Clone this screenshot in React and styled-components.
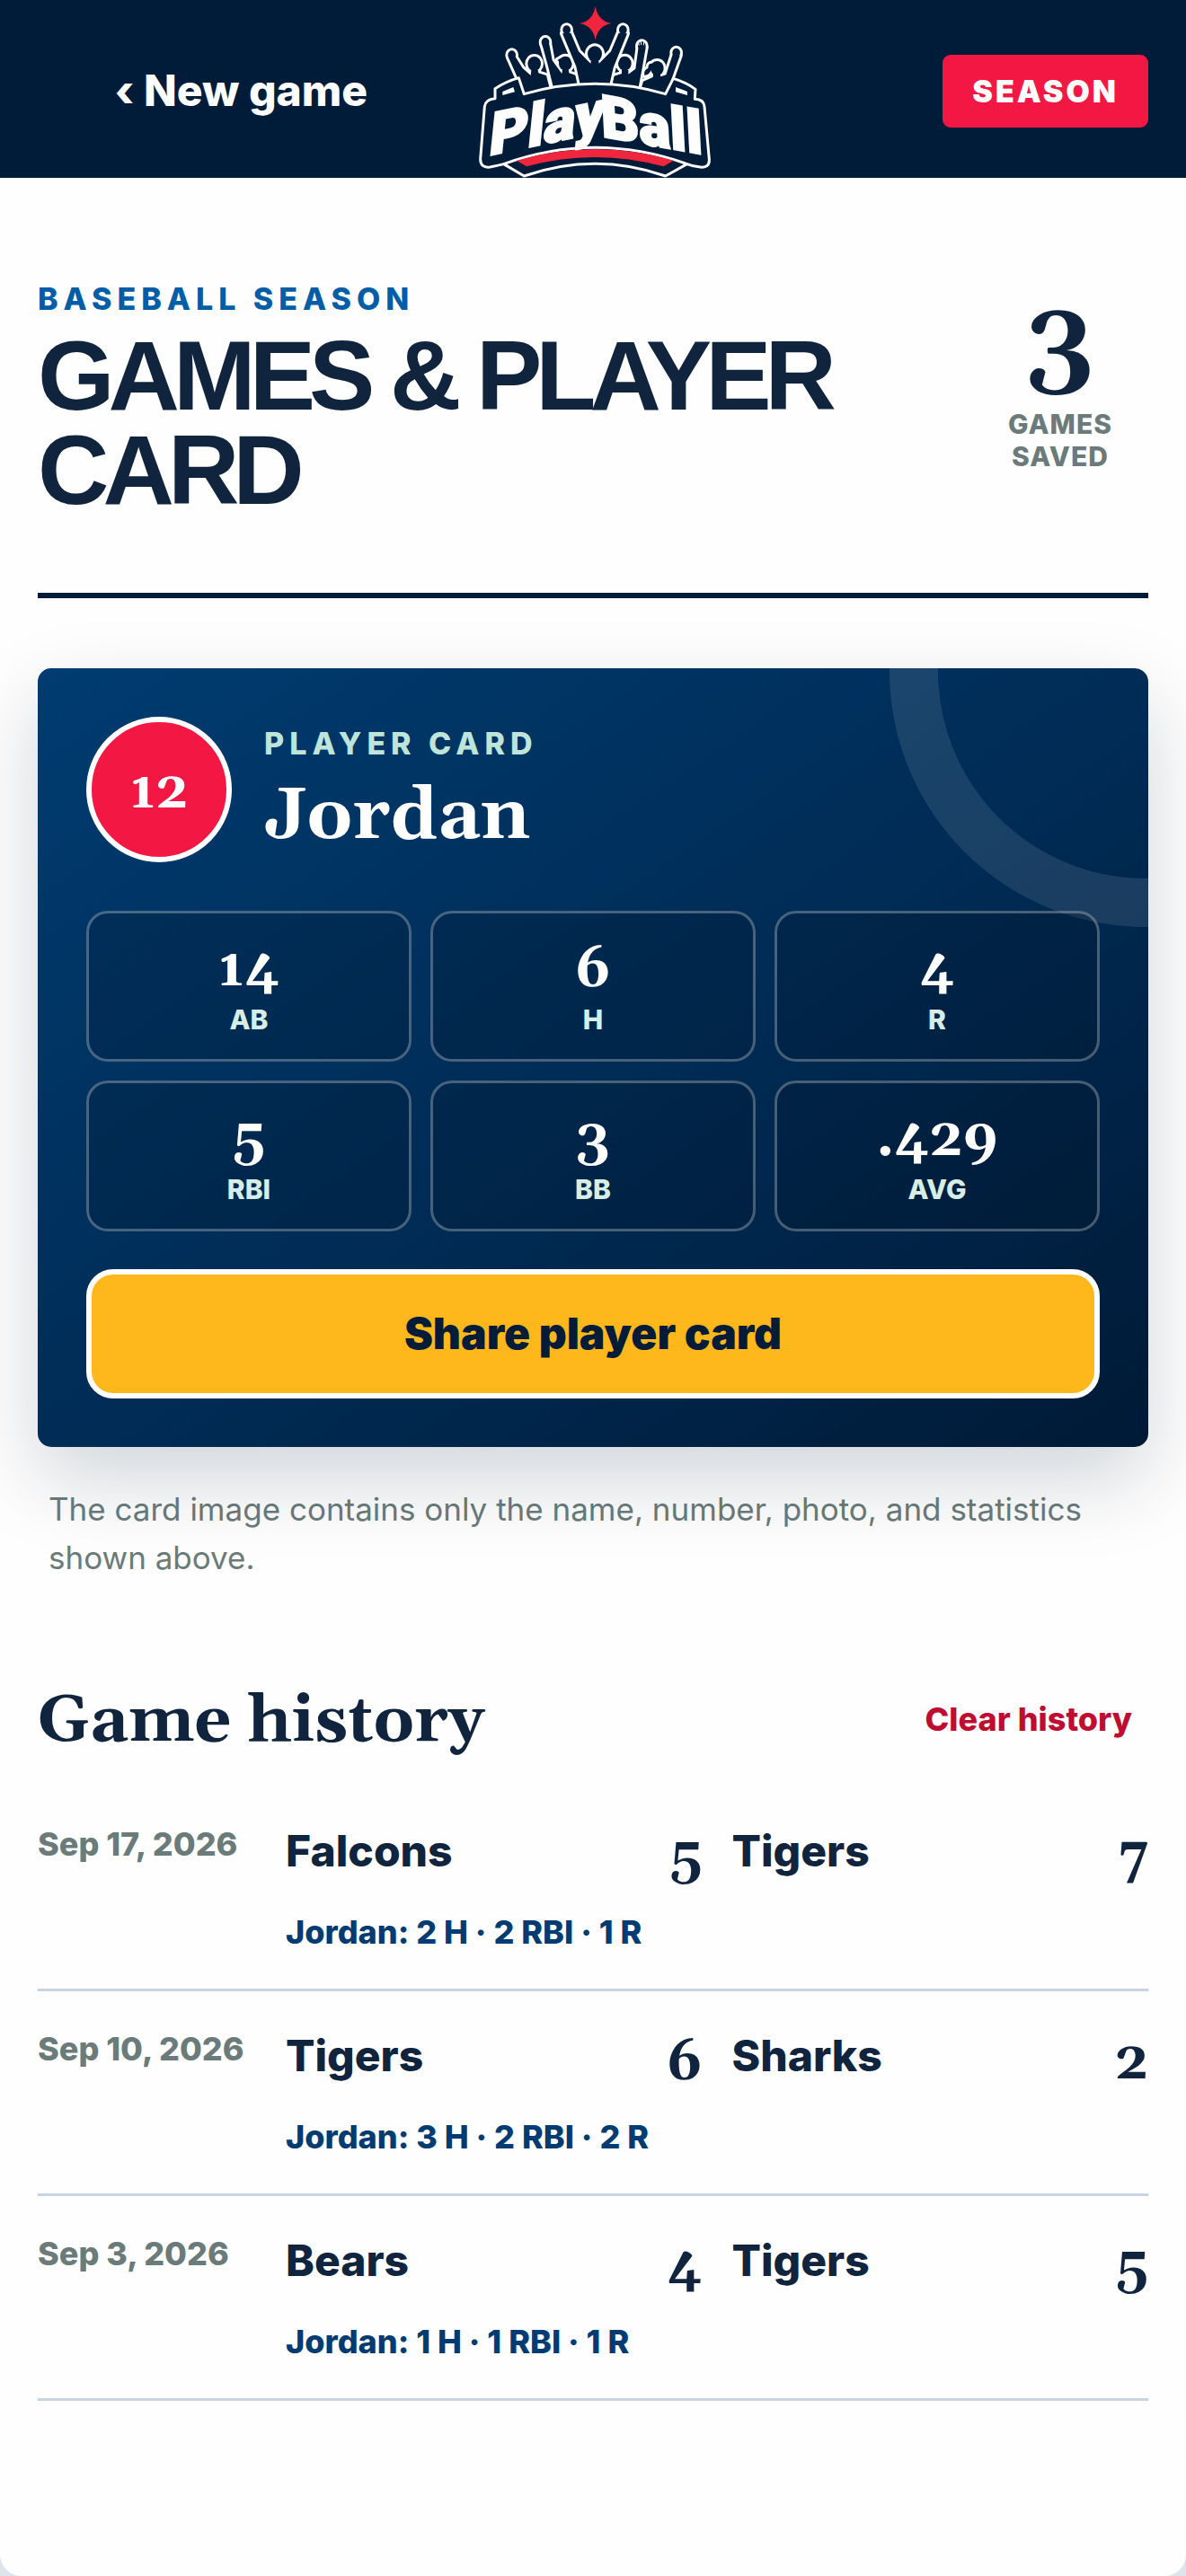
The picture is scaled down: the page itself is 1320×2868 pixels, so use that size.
import React from "react";
import styled, { createGlobalStyle } from "styled-components";

const sans = `Inter, "Liberation Sans", sans-serif`;
const serif = `Georgia, Gelasio, "Liberation Serif", serif`;

const GlobalStyle = createGlobalStyle`
  *, *::before, *::after { box-sizing: border-box; }
  body { margin: 0; background: #dfe4ec; font-family: ${sans}; color: #10243e; }
  h1, h2, p, ul, dl, dd { margin: 0; padding: 0; }
  button { font-family: inherit; cursor: pointer; }
`;

const Page = styled.div`
  min-height: 100vh;
  background: #fefefe;
  border-radius: 0 0 24px 24px;
`;

const TopBar = styled.header`
  display: grid;
  grid-template-columns: 1fr 330px 1fr;
  align-items: center;
  height: 198px;
  padding: 2px 42px 0;
  background: #001c38;
`;

const BackLink = styled.a`
  justify-self: center;
  color: #fff;
  font-size: 48px;
  line-height: 58px;
  font-weight: 800;
  text-decoration: none;
  white-space: nowrap;
`;

const LogoArt = styled.svg`
  display: block;
  justify-self: center;
  width: 320px;
  height: 198px;
`;

const SeasonButton = styled.button`
  justify-self: end;
  height: 81px;
  padding: 0 33px;
  border: 0;
  border-radius: 9px;
  background: #f21843;
  color: #fff;
  font-size: 34px;
  line-height: 41px;
  font-weight: 900;
  letter-spacing: 3px;
`;

const Main = styled.main`
  padding: 114px 42px 0;
`;

const Intro = styled.section`
  display: grid;
  grid-template-columns: 1fr 196px;
  align-items: start;
  padding-bottom: 85px;
  border-bottom: 6px solid #001c38;
`;

const Eyebrow = styled.p`
  color: ${(p) => p.$color};
  font-size: 34px;
  line-height: 41px;
  font-weight: 800;
  letter-spacing: 6px;
  text-transform: uppercase;
  margin-bottom: 12px;
`;

const Title = styled.h1`
  font-family: "Liberation Sans", Arial, sans-serif;
  font-size: 110px;
  line-height: 105px;
  font-weight: 700;
  letter-spacing: -7px;
  text-transform: uppercase;
`;

const Count = styled.div`
  display: grid;
  gap: 2px;
  text-align: center;
`;

const CountNumber = styled.strong`
  font-family: ${serif};
  font-size: 120px;
  line-height: 140px;
  font-weight: 700;
`;

const CountLabel = styled.span`
  padding: 0 30px;
  color: #6b7b7a;
  font-size: 30px;
  line-height: 36px;
  font-weight: 800;
  letter-spacing: 1px;
  text-transform: uppercase;
`;

const PlayerCard = styled.section`
  position: relative;
  margin-top: 78px;
  padding: 54px;
  border-radius: 15px;
  background: linear-gradient(145deg, #003c71 0%, #002b54 55%, #001a36 100%);
  box-shadow: 0 36px 90px rgba(0, 28, 56, 0.18);
`;

const RingClip = styled.div`
  position: absolute;
  inset: 0;
  overflow: hidden;
  border-radius: 15px;

  &::after {
    content: "";
    position: absolute;
    top: -282px;
    right: -282px;
    width: 570px;
    height: 570px;
    border: 54px solid rgba(255, 255, 255, 0.1);
    border-radius: 50%;
  }
`;

const CardBody = styled.div`
  position: relative;
`;

const PlayerHead = styled.div`
  display: flex;
  align-items: flex-start;
  gap: 36px;
`;

const PlayerText = styled.div`
  padding-top: 9px;
`;

const JerseyNumber = styled.div`
  display: grid;
  place-items: center;
  width: 162px;
  height: 162px;
  padding-top: 6px;
  border: 6px solid #fff;
  border-radius: 50%;
  background: #f21843;
  color: #fff;
  font-family: ${serif};
  font-size: 58px;
  line-height: 66px;
  font-weight: 700;
`;

const PlayerName = styled.h2`
  color: #fff;
  font-family: ${serif};
  font-size: 80px;
  line-height: 99px;
  font-weight: 700;
`;

const StatGrid = styled.dl`
  display: grid;
  grid-template-columns: repeat(3, 1fr);
  gap: 21px;
  margin: 54px 0 42px;
`;

const Stat = styled.div`
  display: flex;
  flex-direction: column-reverse;
  justify-content: center;
  height: 168px;
  border: 3px solid rgba(255, 255, 255, 0.28);
  border-radius: 24px;
  background: rgba(0, 10, 24, 0.18);
  text-align: center;
`;

const StatLabel = styled.dt`
  color: #d7eee7;
  font-size: 30px;
  line-height: 36px;
  font-weight: 800;
`;

const StatValue = styled.dd`
  color: #fff;
  font-family: ${serif};
  font-size: 60px;
  line-height: 74px;
  font-weight: 700;
`;

const ShareButton = styled.button`
  width: 100%;
  height: 144px;
  border: 6px solid #fff;
  border-radius: 30px;
  background: #ffb81c;
  color: #001c38;
  font-size: 48px;
  line-height: 58px;
  font-weight: 900;
`;

const Note = styled.p`
  margin-top: 42px;
  padding: 0 12px;
  color: #6b7b7a;
  font-size: 35px;
  line-height: 54px;
`;

const HistoryHead = styled.div`
  display: flex;
  align-items: center;
  justify-content: space-between;
  margin: 87px 0 9px;
`;

const HistoryTitle = styled.h2`
  padding-top: 6px;
  font-family: ${serif};
  font-size: 72px;
  line-height: 82px;
  font-weight: 700;
`;

const ClearButton = styled.button`
  height: 132px;
  padding: 0 18px;
  border: 0;
  background: transparent;
  color: #bf0d32;
  font-size: 36px;
  line-height: 41px;
  font-weight: 800;
`;

const GameList = styled.ul`
  list-style: none;
`;

const GameRow = styled.li`
  display: grid;
  grid-template-columns: 234px 1fr;
  column-gap: 42px;
  padding: 42px 0;
  border-bottom: 3px solid #c8d3e1;
`;

const GameDate = styled.time`
  color: #6b7b7a;
  font-size: 36px;
  line-height: 45px;
  font-weight: 800;
  white-space: nowrap;
`;

const Teams = styled.div`
  display: grid;
  grid-template-columns: 1fr 1fr;
  column-gap: 33px;
`;

const Team = styled.div`
  display: flex;
  justify-content: space-between;
`;

const TeamName = styled.span`
  font-size: 48px;
  line-height: 60px;
  font-weight: 800;
`;

const Score = styled.strong`
  font-family: ${serif};
  font-size: 60px;
  line-height: 76px;
  font-weight: 700;
`;

const PlayerLine = styled.p`
  margin-top: 24px;
  color: #003c71;
  font-size: 36px;
  line-height: 41px;
  font-weight: 800;
`;

const Wordmark = styled.text`
  font-family: Roboto, Inter, sans-serif;
  font-size: 196px;
  font-weight: 900;
  fill: #fdfdfd;
  stroke: #fdfdfd;
  stroke-width: 7px;
`;

const navy = "#001c38";
const white = "#fdfdfd";

/* A cheering fan: a white outline behind a navy silhouette. */
function Fan({ body, fists, head, extra }) {
  const shapes = (
    <>
      <path d={body} />
      {fists.map(([x, y]) => (
        <ellipse key={x} cx={x} cy={y} rx="13" ry="15" />
      ))}
      <ellipse cx={head[0]} cy={head[1]} rx={head[2]} ry={head[2] + 2} />
      {extra && <path d={extra} />}
    </>
  );
  return (
    <>
      <g fill={white} stroke={white} strokeWidth="18" strokeLinejoin="round">{shapes}</g>
      <g fill={navy}>{shapes}</g>
    </>
  );
}

function Logo() {
  return (
    <LogoArt viewBox="0 0 960 594" role="img" aria-label="PlayBall">
      <path d="M488 14 Q496 64 542 72 Q496 80 488 128 Q480 80 435 72 Q480 64 488 14Z" fill="#f0263f" />
      <Fan
        body="M198 186 L221 184 L245 222 L272 246 L274 228 L296 228 L298 238 L324 246 L338 300 L254 312Z"
        fists={[[209, 178]]}
        head={[284, 207, 22]}
      />
      <Fan
        body="M746 176 L770 180 L724 310 L638 300 L648 266 L680 252 L682 238 L704 238 L706 250 L724 244Z"
        fists={[[758, 170]]}
        head={[694, 222, 22]}
        extra="M682 208 Q664 202 664 222 Q648 228 652 246 Q668 244 674 228Z"
      />
      <Fan
        body="M310 142 L334 142 L344 196 L376 240 L378 226 L398 226 L400 238 L424 246 L434 290 L350 296 L332 222Z"
        fists={[[321, 135]]}
        head={[388, 206, 22]}
        extra="M362 194 Q376 184 394 188 L372 208Z"
      />
      <Fan
        body="M632 150 L656 154 L644 222 L630 296 L540 290 L550 248 L576 240 L576 228 L598 228 L598 242 L622 224Z"
        fists={[[643, 148]]}
        head={[586, 206, 22]}
      />
      <path d="M634 146 L632 136 M641 144 L640 132 M649 145 L650 134" stroke={white} strokeWidth="3" />
      <Fan
        body="M378 106 L406 104 L432 166 L472 206 L474 190 L498 190 L500 206 L540 166 L566 104 L594 106 L548 220 L532 290 L440 290 L424 216Z"
        fists={[[392, 94], [580, 94]]}
        head={[486, 174, 24]}
      />
      <path
        d="M232 254 Q190 266 153 290 L153 323 Q120 326 118 350 L104 525 Q104 556 136 552 Q160 548 182 542 L250 582 Q487 500 722 582 L794 542 Q812 550 838 552 Q870 556 868 525 L852 350 Q850 326 820 325 L822 292 Q790 268 748 256 L722 308 Q487 240 250 308Z"
        fill={navy}
        stroke={white}
        strokeWidth="9"
        strokeLinejoin="round"
      />
      <path d="M182 542 Q487 432 794 542" fill="none" stroke={white} strokeWidth="9" />
      <path d="M178 300 L214 285 L219 301 L178 312Z M756 285 L795 300 L795 312 L756 301Z" fill={white} />
      <path d="M225 530 Q487 454 750 530 L715 550 Q487 488 258 550Z" fill="#f0263f" />
      <Wordmark transform="translate(130 514) skewY(-12) skewX(-6)">Play</Wordmark>
      <Wordmark transform="translate(510 450) skewY(10) skewX(3)">Ball</Wordmark>
    </LogoArt>
  );
}

const stats = [
  ["AB", "14"],
  ["H", "6"],
  ["R", "4"],
  ["RBI", "5"],
  ["BB", "3"],
  ["AVG", ".429"],
];

const games = [
  { date: "Sep 17, 2026", iso: "2026-09-17", teams: [["Falcons", 5], ["Tigers", 7]], line: "Jordan: 2 H · 2 RBI · 1 R" },
  { date: "Sep 10, 2026", iso: "2026-09-10", teams: [["Tigers", 6], ["Sharks", 2]], line: "Jordan: 3 H · 2 RBI · 2 R" },
  { date: "Sep 3, 2026", iso: "2026-09-03", teams: [["Bears", 4], ["Tigers", 5]], line: "Jordan: 1 H · 1 RBI · 1 R" },
];

export default function App() {
  return (
    <Page>
      <GlobalStyle />
      <TopBar>
        <BackLink href="#new-game">‹ New game</BackLink>
        <Logo />
        <SeasonButton type="button">SEASON</SeasonButton>
      </TopBar>
      <Main>
        <Intro>
          <div>
            <Eyebrow $color="#005da6">Baseball season</Eyebrow>
            <Title>Games &amp; player card</Title>
          </div>
          <Count>
            <CountNumber>3</CountNumber>
            <CountLabel>Games saved</CountLabel>
          </Count>
        </Intro>

        <PlayerCard>
          <RingClip />
          <CardBody>
            <PlayerHead>
              <JerseyNumber>12</JerseyNumber>
              <PlayerText>
                <Eyebrow $color="#bfe5db">Player card</Eyebrow>
                <PlayerName>Jordan</PlayerName>
              </PlayerText>
            </PlayerHead>
            <StatGrid>
              {stats.map(([label, value]) => (
                <Stat key={label}>
                  <StatLabel>{label}</StatLabel>
                  <StatValue>{value}</StatValue>
                </Stat>
              ))}
            </StatGrid>
            <ShareButton type="button">Share player card</ShareButton>
          </CardBody>
        </PlayerCard>
        <Note>The card image contains only the name, number, photo, and statistics shown above.</Note>

        <section>
          <HistoryHead>
            <HistoryTitle>Game history</HistoryTitle>
            <ClearButton type="button">Clear history</ClearButton>
          </HistoryHead>
          <GameList>
            {games.map((game) => (
              <GameRow key={game.iso}>
                <GameDate dateTime={game.iso}>{game.date}</GameDate>
                <div>
                  <Teams>
                    {game.teams.map(([name, score]) => (
                      <Team key={name}>
                        <TeamName>{name}</TeamName>
                        <Score>{score}</Score>
                      </Team>
                    ))}
                  </Teams>
                  <PlayerLine>{game.line}</PlayerLine>
                </div>
              </GameRow>
            ))}
          </GameList>
        </section>
      </Main>
    </Page>
  );
}
